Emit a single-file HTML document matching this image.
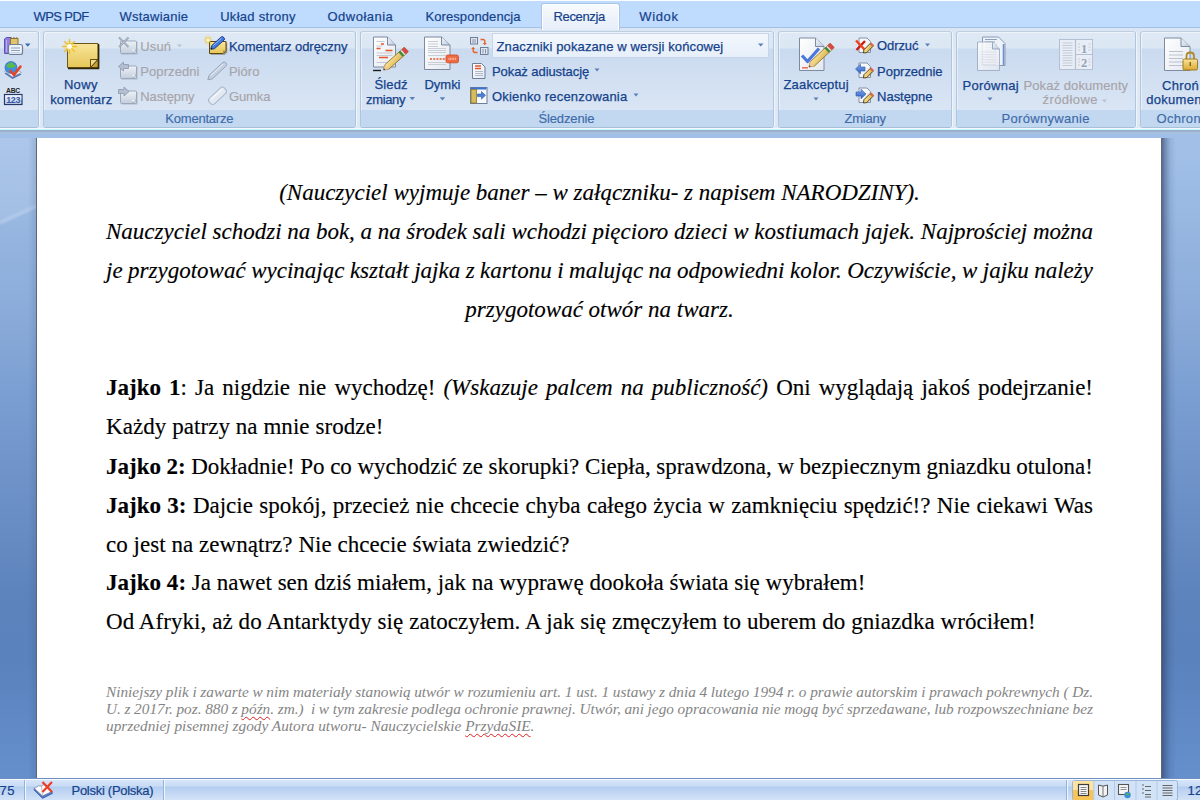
<!DOCTYPE html>
<html><head><meta charset="utf-8">
<style>
*{margin:0;padding:0;box-sizing:border-box}
html,body{width:1200px;height:800px;overflow:hidden;position:relative;font-family:"Liberation Sans",sans-serif;background:#a6c4ea}
.a{position:absolute;white-space:nowrap}
#tabs{left:0;top:0;width:1200px;height:28px;background:#bfdbfe;border-top:1px solid #fafcff;border-bottom:1px solid #a3c0ea}
.tab{font-size:13px;color:#15428b;line-height:14px;-webkit-text-stroke:.2px}
#acttab{left:541px;top:3px;width:79px;height:27px;border:1px solid #a9c5e9;border-bottom:none;border-radius:3px 3px 0 0;background:linear-gradient(#f8fbff,#edf2fa 60%,#e6eef9);box-shadow:inset 1px 1px 0 #fff,inset -1px 0 0 #fff}
#ribbon{left:0;top:28px;width:1200px;height:102px;background:linear-gradient(#dbe6f4,#e0eaf7 40%,#dde8f6)}
.grp{top:31px;height:97px;border:1px solid #afc6de;border-top-color:#bfcfe0;border-bottom-color:#a6c0d8;border-radius:3px;background:linear-gradient(#dfe9f5 0,#dce7f4 16px,#cadaef 17px,#d9e5f4 77px);box-shadow:inset 1px 1px 0 rgba(255,255,255,.45),1px 0 0 rgba(255,255,255,.55)}
.grp .lb{position:absolute;left:0;right:0;bottom:0;height:17px;background:#c2d8f0;border-radius:0 0 2px 2px}
.lbl{font-size:13px;color:#3e6aaa;line-height:14px;-webkit-text-stroke:.15px}
.st{font-size:13px;color:#15428b;line-height:14px;-webkit-text-stroke:.2px}
.t{font-size:13px;color:#15428b;line-height:14px;-webkit-text-stroke:.25px}
.dis{color:#a7a4a9;-webkit-text-stroke:.15px}
#gap{left:0;top:128px;width:1200px;height:10px;background:linear-gradient(#f2f8ff 0,#f2f8ff 1px,#c6f6fc 1px,#c6f6fc 2px,#9aafcc 2px,#9aafcc 4px,#a9c1e1 4px,#a9c1e1 6px,#a1c0e8 6px)}
#bg{left:0;top:138px;width:1200px;height:640px;background:linear-gradient(#a3c1e8 0,#8aabd9 180px,#7a9ed2 260px,#5d83bc 460px,#5a82bd 520px,#6590cc 640px)}
#streak{left:0;top:138px;width:37px;height:110px}
#page{left:36px;top:138px;width:1125px;height:640px;background:#fff;border-left:1px solid #5c6878}
#shR{left:1161px;top:138px;width:15px;height:640px;background:linear-gradient(90deg,rgba(100,100,105,.95) 0,rgba(100,100,105,.95) 1px,rgba(45,65,105,.65) 1px,rgba(45,65,105,.42) 4px,rgba(45,65,105,.12) 9px,rgba(45,65,105,0) 15px)}
#shL{left:28px;top:138px;width:8px;height:640px;background:linear-gradient(90deg,rgba(40,60,100,0),rgba(40,60,100,.14))}
.doc{font-family:"Liberation Serif",serif;font-size:23px;color:#000;line-height:39px;position:absolute;white-space:nowrap;-webkit-text-stroke:.15px}
.just{text-align:justify;text-align-last:justify;white-space:normal}
.foot{font-size:15.3px;line-height:17px;font-style:italic;color:#848484;-webkit-text-stroke:0}
.sq{text-decoration:underline wavy #e02020;text-decoration-thickness:1px;text-underline-offset:2px;text-decoration-skip-ink:none}
#status{left:0;top:778px;width:1200px;height:22px;border-top:1px solid #6f8fc0;background:linear-gradient(#f7faff 0,#f7faff 1px,#d6e5f9 1px,#c9dcf5 7px,#b2cdf2 8px,#bcd3f2 11px,#d2e2f7 21px)}
</style></head><body>
<div class="a" id="bg"></div>
<svg class="a" id="streak" width="37" height="110" viewBox="0 0 37 110"><defs><filter id="bl"><feGaussianBlur stdDeviation="1"/></filter></defs><path d="M0 0h37v67l-37 17z" fill="#fff" opacity=".1"/><path d="M0 85l37-17" stroke="#fff" stroke-width="2.5" opacity=".3" filter="url(#bl)"/></svg>
<div class="a" id="shL"></div><div class="a" id="shR"></div>
<div class="a" id="page"></div>

<div class="doc" style="left:106px;top:173.3px;width:987px">
<div style="text-align:center;font-style:italic">(Nauczyciel wyjmuje baner – w załączniku- z napisem NARODZINY).</div>
<div class="just" style="font-style:italic;word-spacing:-1px">Nauczyciel schodzi na bok, a na środek sali wchodzi pięcioro dzieci w kostiumach jajek. Najprościej można</div>
<div class="just" style="font-style:italic;word-spacing:-1px">je przygotować wycinając kształt jajka z kartonu i malując na odpowiedni kolor. Oczywiście, w jajku należy</div>
<div style="text-align:center;font-style:italic">przygotować otwór na twarz.</div>
</div>
<div class="doc just" style="left:106px;top:368.2px;width:987px;word-spacing:-1px"><b>Jajko 1</b>: Ja nigdzie nie wychodzę! <i>(Wskazuje palcem na publiczność)</i> Oni wyglądają jakoś podejrzanie!</div>
<div class="doc" style="left:106px;top:407.2px;width:987px;letter-spacing:.06px">Każdy patrzy na mnie srodze!</div>
<div class="doc just" style="left:106px;top:447.0px;width:987px;word-spacing:-1px"><b>Jajko 2:</b> Dokładnie! Po co wychodzić ze skorupki? Ciepła, sprawdzona, w bezpiecznym gniazdku otulona!</div>
<div class="doc just" style="left:106px;top:486.0px;width:987px;word-spacing:-1px"><b>Jajko 3:</b> Dajcie spokój, przecież nie chcecie chyba całego życia w zamknięciu spędzić!? Nie ciekawi Was</div>
<div class="doc" style="left:106px;top:525.0px;width:987px;letter-spacing:.04px">co jest na zewnątrz? Nie chcecie świata zwiedzić?</div>
<div class="doc" style="left:106px;top:563.2px;width:987px;letter-spacing:.025px"><b>Jajko 4:</b> Ja nawet sen dziś miałem, jak na wyprawę dookoła świata się wybrałem!</div>
<div class="doc" style="left:106px;top:602.2px;width:987px;letter-spacing:.072px">Od Afryki, aż do Antarktydy się zatoczyłem. A jak się zmęczyłem to uberem do gniazdka wróciłem!</div>
<div class="doc foot" style="left:106px;top:682.7px;width:987px">
<div class="just" style="word-spacing:-1px">Niniejszy plik i zawarte w nim materiały stanowią utwór w rozumieniu art. 1 ust. 1 ustawy z dnia 4 lutego 1994 r. o prawie autorskim i prawach pokrewnych ( Dz.</div>
<div class="just" style="word-spacing:-1px">U. z 2017r. poz. 880 z <span class="sq">późn</span>. zm.)&nbsp; i w tym zakresie podlega ochronie prawnej. Utwór, ani jego opracowania nie mogą być sprzedawane, lub rozpowszechniane bez</div>
<div>uprzedniej pisemnej zgody Autora utworu- Nauczycielskie <span class="sq">PrzydaSIE</span>.</div>
</div>

<div class="a" id="tabs"></div>

<div class="a" id="ribbon"></div>
<div class="a" id="acttab"></div>
<div class="a grp" style="left:-4px;width:43px"><div class="lb"></div></div>
<div class="a grp" style="left:43px;width:313px"><div class="lb"></div></div>
<div class="a grp" style="left:360px;width:414px"><div class="lb"></div></div>
<div class="a grp" style="left:778px;width:174px"><div class="lb"></div></div>
<div class="a grp" style="left:956px;width:180px"><div class="lb"></div></div>
<div class="a grp" style="left:1140px;width:70px"><div class="lb"></div></div>


<div class="a" id="gap"></div>
<div class="a" id="status"></div>
<!--ICONS-->
<svg class="a" style="left:0;top:0" width="1200" height="130" viewBox="0 0 1200 130">
<defs>
<linearGradient id="gNote" x1="0" y1="0" x2="0" y2="1"><stop offset="0" stop-color="#f8e69a"/><stop offset="1" stop-color="#e6c558"/></linearGradient>
<linearGradient id="gFold" x1="0" y1="0" x2="1" y2="1"><stop offset="0" stop-color="#f3dc84"/><stop offset="1" stop-color="#b8902a"/></linearGradient>
<linearGradient id="gDis" x1="0" y1="0" x2="0" y2="1"><stop offset="0" stop-color="#eef2f7"/><stop offset="1" stop-color="#c3cddb"/></linearGradient>
<linearGradient id="gDoc" x1="0" y1="0" x2="1" y2="1"><stop offset="0" stop-color="#ffffff"/><stop offset="1" stop-color="#e4e8ef"/></linearGradient>
<linearGradient id="gCorner" x1="0" y1="0" x2="1" y2="1"><stop offset="0" stop-color="#f4f7fb"/><stop offset="1" stop-color="#b9c8de"/></linearGradient>
<linearGradient id="gPencil" x1="0" y1="0" x2="1" y2="1"><stop offset="0" stop-color="#fbe7a0"/><stop offset="1" stop-color="#d9b04a"/></linearGradient>
<linearGradient id="gBlue" x1="0" y1="0" x2="0" y2="1"><stop offset="0" stop-color="#7fa6ec"/><stop offset="1" stop-color="#2f5fc4"/></linearGradient>
<linearGradient id="gLock" x1="0" y1="0" x2="0" y2="1"><stop offset="0" stop-color="#fbe49a"/><stop offset="1" stop-color="#d9a934"/></linearGradient>
<radialGradient id="gStar"><stop offset="0" stop-color="#ffffff"/><stop offset=".35" stop-color="#fff6b0"/><stop offset="1" stop-color="#f2c62c" stop-opacity="0"/></radialGradient>
<linearGradient id="gCombo" x1="0" y1="0" x2="0" y2="1"><stop offset="0" stop-color="#f4f8fd"/><stop offset="1" stop-color="#e6eef9"/></linearGradient>
</defs>

<!-- group0 icons -->
<path d="M4.5 39l2-1.5h4.5v16h-6.5z" fill="#8f7fe0" stroke="#5e50b0" stroke-width="1"/>
<path d="M6.5 40v12" stroke="#b9adf2" stroke-width="1"/>
<path d="M10.5 38.5h7.5v7h-7.5z" fill="#e2c46a" stroke="#8c7436" stroke-width="1"/>
<path d="M11 37.5l1.5 1l1.5-1l1.5 1l1.5-1l1 1" fill="none" stroke="#8c7436" stroke-width=".8"/>
<rect x="8.5" y="44.5" width="14" height="10" rx="2" fill="#eef3f9" stroke="#6f7f98" stroke-width="1.2"/>
<path d="M11 48h9M11 50.5h9" stroke="#8aa0c0" stroke-width="1.1"/>
<rect x="10.5" y="52" width="10" height="1.5" fill="#c9d6e8"/>
<path d="M25 43.5h5.5l-2.75 3.3z" fill="#3b6ab0"/>
<path d="M4.5 73.5l8 5.5l9-4.5l-8.5-5z" fill="#5270b0"/>
<path d="M4.5 71.5l8 5.5l9-4.5l-8.5-5z" fill="#eef2f8" stroke="#8a96aa" stroke-width=".7"/>
<circle cx="11" cy="67.5" r="6" fill="#3f8fdc" stroke="#2a62a8" stroke-width=".6"/>
<path d="M6.5 65.5c1.5-2.5 4-3.5 6.5-3c-.5 1.5.5 2.5 2.5 2.5c.5 2-2 3.5-4.5 2.5c-2 1-3.5 0-4.5-2z" fill="#5cbb44"/>
<path d="M10.5 71l3.5 4l6.5-8.5" fill="none" stroke="#e5432a" stroke-width="2.6" stroke-linecap="round" stroke-linejoin="round"/>
<text x="13" y="92.5" font-family="Liberation Sans" font-size="6.8" font-weight="bold" text-anchor="middle" fill="#222" letter-spacing="-.2">ABC</text>
<rect x="4.5" y="94.5" width="17.5" height="10" fill="#c9d8ee" stroke="#26386a" stroke-width="1.2"/>
<rect x="5.3" y="95.3" width="16" height="4" fill="#e9f0fa"/>
<text x="13.2" y="103.2" font-family="Liberation Sans" font-size="9" font-weight="bold" text-anchor="middle" fill="#3656a6" letter-spacing="-.3">123</text>

<!-- Nowy komentarz -->
<path d="M68.5 44.5h31v24h-31z" fill="#2a1f05" opacity=".5"/>
<path d="M67.5 43.5h30.5v24h-30.5z" fill="url(#gNote)" stroke="#6b5518" stroke-width="1"/>
<path d="M98.5 44v24.5h-30.5" fill="none" stroke="#2e2306" stroke-width="1.3"/>
<path d="M90.5 67.5v-8h7.5z" fill="#f2dc86" stroke="#4a3a0c" stroke-width=".9"/>
<path d="M90.5 67.5l7.5-8v8z" fill="#c9a235" stroke="#4a3a0c" stroke-width=".9"/>
<circle cx="69.5" cy="46.5" r="6.5" fill="url(#gStar)"/>
<path d="M69.5 39.5v14M62.5 46.5h14M64.5 41.5l10 10M74.5 41.5l-10 10" stroke="#e8b820" stroke-width="1.4" stroke-linecap="round" opacity=".8"/>
<circle cx="69.5" cy="46.5" r="2.5" fill="#fffef0"/>

<!-- disabled notes -->
<g id="dn">
<path d="M121.5 42h16v12.5h-16z" fill="#8e9ab0" opacity=".55"/>
<rect x="120.5" y="41" width="16" height="12.5" rx="1" fill="url(#gDis)" stroke="#9ba7ba" stroke-width="1"/>
<path d="M132 53.5l4.5-4.5" stroke="#a3aec0" stroke-width="1"/>
<circle cx="133.5" cy="50.5" r=".9" fill="#fff"/>
</g>
<path d="M119 37.5l9.5 9.5M128.5 37.5l-9.5 9.5" stroke="#8f9bb0" stroke-width="1.8"/>
<path d="M119 37.5l9.5 9.5M128.5 37.5l-9.5 9.5" stroke="#c9d1dd" stroke-width=".7"/>
<use href="#dn" transform="translate(0 25)"/>
<path d="M118.5 66.5l5-4.5v2.5h5v4h-5v2.5z" fill="#b3bfd0" stroke="#8a97ad" stroke-width=".8"/>
<use href="#dn" transform="translate(0 50)"/>
<path d="M129 91.5l-5-4.5v2.5h-5.5v4h5.5v2.5z" fill="#b3bfd0" stroke="#8a97ad" stroke-width=".8"/>

<!-- Komentarz odręczny -->
<path d="M210 42h16.5v9.5l-2.5 2.5h-14z" fill="#3a2c08" opacity=".45" transform="translate(.7 .7)"/>
<path d="M209.5 41.5h16.5v9l-3 3h-13.5z" fill="url(#gNote)" stroke="#5e4812" stroke-width="1"/>
<path d="M226 50.5l-3 3v-3z" fill="#b8902a"/>
<path d="M208 35.5v9M203.5 40h9M205 37l6 6M211 37l-6 6" stroke="#f2c83a" stroke-width="1.1" opacity=".85"/>
<circle cx="208" cy="40" r="1.6" fill="#fffbe0"/>
<g transform="translate(210.8 49.2) rotate(-42)">
<path d="M0 0l3-2.1h13q1.5 0 1.5 2.1t-1.5 2.1h-13z" fill="#3f7ae0" stroke="#1c3a86" stroke-width=".9"/>
<path d="M4 -1h11.5" stroke="#9cc0f6" stroke-width=".9"/>
<path d="M0 0l1.4-1v2z" fill="#111"/>
</g>
<!-- Pióro -->
<g transform="translate(207.8 79.8) rotate(-43)">
<path d="M0 0l4-2.4h19q1.8 0 1.8 2.4t-1.8 2.4h-19z" fill="#c3cede" stroke="#95a4ba" stroke-width=".9"/>
<path d="M5 -1.1h17" stroke="#e6ecf5" stroke-width="1"/>
</g>
<!-- Gumka -->
<g transform="translate(217.5 95.8) rotate(-43)">
<rect x="-10.3" y="-3.8" width="20.6" height="7.6" rx="3" fill="#e3e9f2" stroke="#aab6c8" stroke-width="1"/>
<path d="M-7.5 -1.8h15" stroke="#f7f9fc" stroke-width="1.2"/>
</g>

<!-- Śledź zmiany -->
<path d="M373.5 37h14l8 8v22h-22z" fill="url(#gDoc)" stroke="#7d8aa0" stroke-width="1"/>
<path d="M387.5 37v8h8" fill="url(#gCorner)" stroke="#7d8aa0" stroke-width="1"/>
<path d="M376.5 41.5h8M376.5 46h6M376.5 53h16M376.5 55.5h16M376.5 62.5h12" stroke="#c4cad4" stroke-width="1"/>
<path d="M381 44h3M376.5 48.5h4M385.5 50.5h7M379 57.5h9" stroke="#e4572e" stroke-width="1.5"/>
<path d="M373 70.5h8" stroke="#1a1a1a" stroke-width="1.4"/>
<g transform="translate(383.5 70) rotate(-42)">
<path d="M0 0l4.5-3h26v6h-26z" fill="url(#gPencil)" stroke="#8c7030" stroke-width=".8"/>
<path d="M0 0l4.5-3v6z" fill="#f0c89a"/>
<path d="M0 0l1.6-1v2z" fill="#333"/>
<rect x="23" y="-3" width="2.5" height="6" fill="#3f8a3a"/>
<rect x="25.5" y="-3" width="1.5" height="6" fill="#d8d8d8"/>
<rect x="27" y="-3" width="4" height="6" fill="#d84848"/>
</g>

<!-- Dymki -->
<path d="M424.5 37h17l8.5 8v24.5h-25.5z" fill="url(#gDoc)" stroke="#7d8aa0" stroke-width="1"/>
<path d="M441.5 37v8h8.5" fill="url(#gCorner)" stroke="#7d8aa0" stroke-width="1"/>
<path d="M428 41.5h10M428 44h10M428 46.5h10M428 48.5h18M428 50.5h18M428 52.5h18M428 55.5h18M428 62.5h18M428 64.5h18" stroke="#c8ced8" stroke-width="1"/>
<path d="M430 59h15" stroke="#e4572e" stroke-width="1.5" stroke-dasharray="2 1.2"/>
<rect x="446" y="55" width="12.5" height="7.8" rx="1.8" fill="#ef6a42" stroke="#cf4a22" stroke-width=".8"/>
<path d="M448.5 58.9h7.5" stroke="#f7b6a0" stroke-width="2.2" stroke-dasharray="1 .6"/>

<!-- Znaczniki small icon -->
<rect x="470.5" y="37.5" width="7" height="6.5" fill="#dfe6f0" stroke="#6f7f99" stroke-width="1"/>
<path d="M472 40h4M472 42h4" stroke="#6f7f99" stroke-width=".8"/>
<rect x="480.5" y="47.5" width="7.5" height="7" fill="#dfe6f0" stroke="#6f7f99" stroke-width="1"/>
<path d="M483 49v4.5M485.5 49v4.5" stroke="#6f7f99" stroke-width=".8"/>
<path d="M480.5 39.5h2.5q1.8 0 1.8 2v2" fill="none" stroke="#e8622c" stroke-width="1.4"/>
<path d="M482.8 43l2 2.3l2-2.3z" fill="#e8622c"/>
<path d="M477.5 52.5h-2.5q-1.8 0-1.8-2v-2" fill="none" stroke="#e8622c" stroke-width="1.4"/>
<path d="M471.2 49l2-2.3l2 2.3z" fill="#e8622c"/>

<!-- combo -->
<rect x="492.5" y="33.5" width="276" height="24" fill="url(#gCombo)" stroke="#c5d6ec" stroke-width="1"/>
<path d="M758 43.5h5.5l-2.75 3z" fill="#5a7fb8"/>

<!-- Pokaż adiustację -->
<path d="M472.5 63.5h9l3.5 3.5v11.5h-12.5z" fill="url(#gDoc)" stroke="#6f7f99" stroke-width="1"/>
<path d="M475 66h6M475 68.5h6" stroke="#e4572e" stroke-width="1.4"/>
<path d="M475 71.5h8M475 73.5h8M475 75.5h8" stroke="#8fa3c0" stroke-width=".7"/>
<path d="M594.5 68.5h5l-2.5 3z" fill="#5a7fb8"/>

<!-- Okienko -->
<rect x="470.5" y="87.5" width="16.5" height="16" fill="#f7f9fc" stroke="#6f7f99" stroke-width="1"/>
<rect x="471" y="87.5" width="15.5" height="2" fill="#3f73d0"/>
<rect x="471" y="89.5" width="5.5" height="13.5" fill="#d6bc5a" stroke="#8a7430" stroke-width=".8"/>
<path d="M477.5 94h4v-2.5l4 3.8l-4 3.8v-2.5h-4z" fill="#4a7fd8" stroke="#2c59a8" stroke-width=".6"/>
<path d="M633.5 93.5h5l-2.5 3z" fill="#5a7fb8"/>

<!-- Śledź zmiany arrow / Dymki arrow -->
<path d="M409.5 97h5.5l-2.75 3.2z" fill="#5a7fb8"/>
<path d="M439.7 97.2h5.5l-2.75 3.2z" fill="#5a7fb8"/>

<!-- Zaakceptuj -->
<path d="M799.5 38h16l8.5 8.5v24h-24.5z" fill="url(#gDoc)" stroke="#7d8aa0" stroke-width="1"/>
<path d="M815.5 38v8.5h8.5" fill="url(#gCorner)" stroke="#7d8aa0" stroke-width="1"/>
<path d="M802 55.5l5.5 6l11.5-13" fill="none" stroke="#4a78dc" stroke-width="3.2" stroke-linejoin="round"/>
<path d="M802 67.8h6" stroke="#ee6a5a" stroke-width="1.5"/>
<g transform="translate(809 67) rotate(-43)">
<path d="M0 0l4.5-3h27v6h-27z" fill="url(#gPencil)" stroke="#8c7030" stroke-width=".8"/>
<path d="M0 0l4.5-3v6z" fill="#f0c89a"/>
<path d="M0 0l1.6-1v2z" fill="#333"/>
<rect x="24" y="-3" width="2.5" height="6" fill="#3f8a3a"/>
<rect x="26.5" y="-3" width="1.5" height="6" fill="#d8d8d8"/>
<rect x="28" y="-3" width="4" height="6" fill="#d84848"/>
</g>
<path d="M813.5 97.5h5l-2.5 3z" fill="#5a7fb8"/>

<!-- Odrzuć / Poprzednie / Następne -->
<g id="smalldoc">
<path d="M859 38h8l3.5 3.5v11h-11.5z" fill="url(#gDoc)" stroke="#7a879c" stroke-width=".9"/>
</g>
<path d="M859 63h8l3.5 3.5v11h-11.5z" fill="url(#gDoc)" stroke="#7a879c" stroke-width=".9"/>
<path d="M859 88h8l3.5 3.5v11h-11.5z" fill="url(#gDoc)" stroke="#7a879c" stroke-width=".9"/>
<path d="M865 41l-8.5 9" stroke="#c81c10" stroke-width="2.4"/><path d="M856 40.5l9 9.5" stroke="#f0401c" stroke-width="2.4"/>
<path d="M855.5 69l5-4.8v2.8h4.5v4h-4.5v2.8z" fill="url(#gBlue)" stroke="#2c59a8" stroke-width=".6"/>
<path d="M866 94l-5-4.8v2.8h-5v4h5v2.8z" fill="url(#gBlue)" stroke="#2c59a8" stroke-width=".6"/>
<g id="pen1" transform="translate(863.5 53) rotate(-45)"><path d="M0 0l2.5-2h9.5v4h-9.5z" fill="url(#gPencil)" stroke="#3d300c" stroke-width=".8"/><rect x="10.5" y="-2" width="2.5" height="4" fill="#d86a4a"/></g>
<g transform="translate(863.5 78) rotate(-45)"><path d="M0 0l2.5-2h9.5v4h-9.5z" fill="url(#gPencil)" stroke="#3d300c" stroke-width=".8"/><rect x="10.5" y="-2" width="2.5" height="4" fill="#d86a4a"/></g>
<g transform="translate(863.5 103) rotate(-45)"><path d="M0 0l2.5-2h9.5v4h-9.5z" fill="url(#gPencil)" stroke="#3d300c" stroke-width=".8"/><rect x="10.5" y="-2" width="2.5" height="4" fill="#d86a4a"/></g>
<path d="M925 43.5h5l-2.5 3z" fill="#5a7fb8"/>
<path d="M177 44.5h5l-2.5 2.8z" fill="#b9c2cf"/>

<!-- Porównaj -->
<path d="M982.5 37h16l6.5 6.5v22h-22.5z" fill="#eef3fa" stroke="#8a9ab3" stroke-width="1"/>
<path d="M1003.5 44v21" stroke="#6d8fd0" stroke-width="1.6"/>
<path d="M985 39.5h12M985 42h10" stroke="#8ea0bb" stroke-width="1"/>
<path d="M985 45h12M985 47.5h12M985 50h12M985 52.5h12M985 55h12M985 57.5h12M985 60h12M985 62.5h12" stroke="#a8b6ca" stroke-width=".8"/>
<path d="M977.5 42h15l7 7v21.5h-22z" fill="url(#gDoc)" stroke="#9aa8bd" stroke-width="1" opacity=".82"/>
<path d="M992.5 42v7h7" fill="url(#gCorner)" stroke="#9aa8bd" stroke-width="1"/>
<path d="M981 52h15M981 54.5h15M981 57h15M981 59.5h15M981 62h15M981 64.5h15" stroke="#dde2ea" stroke-width="1"/>
<path d="M987.5 97.5h5l-2.5 3z" fill="#5a7fb8"/>

<!-- Pokaż dokumenty źródłowe (disabled) -->
<rect x="1059.5" y="39.5" width="33" height="30" fill="#e9eef6" stroke="#b4c0d2" stroke-width="1"/>
<path d="M1075.5 39.5v30M1075.5 54.5h17" stroke="#b4c0d2" stroke-width="1.2"/>
<path d="M1062.5 43h10M1062.5 45.5h10M1062.5 48h10M1062.5 50.5h10M1062.5 53h10M1062.5 55.5h10M1062.5 58h10M1062.5 60.5h10M1062.5 63h10M1062.5 65.5h10" stroke="#c3ccd9" stroke-width="1"/>
<path d="M1078 44h2M1078 47h2M1078 50h2M1088.5 44h2M1088.5 47h2M1088.5 50h2M1078 59h2M1078 62h2M1078 65h2M1088.5 59h2M1088.5 62h2M1088.5 65h2" stroke="#b9c3d2" stroke-width=".8"/>
<text x="1084" y="52.5" font-family="Liberation Serif" font-weight="bold" font-size="12.5" text-anchor="middle" fill="#97a3b6">1</text>
<text x="1084" y="67" font-family="Liberation Serif" font-weight="bold" font-size="12.5" text-anchor="middle" fill="#97a3b6">2</text>
<path d="M1102 99.5h5l-2.5 3z" fill="#b9c2cf"/>

<!-- Chroń dokument -->
<path d="M1164.5 38h16.5l9 8.5v24h-25.5z" fill="url(#gDoc)" stroke="#7d8aa0" stroke-width="1"/>
<path d="M1181 38v8.5h9" fill="url(#gCorner)" stroke="#7d8aa0" stroke-width="1"/>
<path d="M1169 51.5h14M1169 55h14M1169 58.5h14M1169 62h14M1169 65.5h14" stroke="#b9c1cd" stroke-width="1.2"/>
<path d="M1186.5 59v-3q0-3.5 3.75-3.5t3.75 3.5v3" fill="none" stroke="#b08a2a" stroke-width="1.8"/>
<rect x="1183" y="59" width="14.5" height="11" rx="1.5" fill="url(#gLock)" stroke="#a07a20" stroke-width="1"/>
<path d="M1190.25 62v4" stroke="#6a5010" stroke-width="1.2"/>
</svg>

<!--/ICONS-->

<svg class="a" style="left:0;top:778px" width="1200" height="22" viewBox="0 778 1200 22">
<path d="M24.5 780v20M163.5 780v20M1066.5 780v20" stroke="#97b2d8" stroke-width="1"/>
<path d="M25.5 780v20M164.5 780v20M1067.5 780v20" stroke="#f0f6ff" stroke-width="1"/>
<!-- book icon -->
<path d="M34 790l8.5 8.5l10-5l-.5-2.5l-9.5 4.5l-8-7.5z" fill="#4a72c8" stroke="#3558a8" stroke-width=".6"/>
<path d="M34.5 788.5l8 7.5l9.5-4.5l-6-6.5q-2.5-1-4.5 1q-3-1.5-7 2.5z" fill="#fbfcfe" stroke="#7d8696" stroke-width=".8"/>
<path d="M41.5 786l1 9.5" stroke="#9aa3b2" stroke-width=".7"/>
<path d="M42.5 782l9.5 10M52 782l-9.5 10" stroke="#ef3b24" stroke-width="2.2"/>
<!-- view buttons -->
<rect x="1072.5" y="780.5" width="105" height="20" rx="2" fill="#d3e3f7" stroke="#99b5dc" stroke-width="1"/>
<rect x="1073" y="781" width="20.5" height="19" fill="#fde2a0"/>
<rect x="1073" y="790" width="20.5" height="10" fill="#f8c458"/>
<path d="M1093.8 781v19M1114.5 781v19M1136 781v19M1157 781v19" stroke="#b3c9e6" stroke-width="1"/>
<rect x="1078.5" y="784.5" width="10" height="11" fill="#f8f8f8" stroke="#3c3c3c" stroke-width="1.2"/>
<path d="M1080.5 787.5h6M1080.5 789.5h6M1080.5 791.5h6M1080.5 793.5h6" stroke="#7a7a7a" stroke-width=".9"/>
<path d="M1098.5 785v10l4.5 2l4.5-2v-10l-4.5 1.2z" fill="#f2f2f2" stroke="#555" stroke-width="1"/>
<path d="M1103 786.2v10.5" stroke="#555" stroke-width=".8"/>
<rect x="1118.5" y="784.5" width="10" height="10" fill="#f6f6f6" stroke="#555" stroke-width="1.1"/>
<path d="M1120.5 787.5h6M1120.5 789.5h6" stroke="#777" stroke-width=".8"/>
<circle cx="1127.5" cy="795" r="3.2" fill="#3a8fd8"/><path d="M1125.5 794c1-1.5 3-1.5 4 0c-1 1-3 1.5-4 0z" fill="#58b548"/>
<path d="M1142 785h2M1145 786.5h6M1142 789h2M1145 790.5h6M1142 793h2M1145 794.5h6M1145 797h6" stroke="#666" stroke-width="1"/>
<path d="M1162.5 785.5h10M1162.5 788h10M1162.5 790.5h10M1162.5 793h10M1162.5 795.5h10" stroke="#666" stroke-width="1.2"/>
</svg>
<!--RT-->
<div class="a tab" style="left:33.5px;top:10.3px;letter-spacing:-0.60px">WPS PDF</div>
<div class="a tab" style="left:119.5px;top:10.3px;letter-spacing:0.23px">Wstawianie</div>
<div class="a tab" style="left:220.2px;top:10.3px;letter-spacing:0.28px">Układ strony</div>
<div class="a tab" style="left:327.5px;top:10.3px;letter-spacing:0.48px">Odwołania</div>
<div class="a tab" style="left:425.5px;top:10.3px;letter-spacing:0.08px">Korespondencja</div>
<div class="a tab" style="left:553.5px;top:10.3px;letter-spacing:-0.36px">Recenzja</div>
<div class="a tab" style="left:639.2px;top:10.3px;letter-spacing:0.67px">Widok</div>
<div class="a t" style="left:63.9px;top:77.9px;letter-spacing:0.33px">Nowy</div>
<div class="a t" style="left:50.2px;top:92.9px;letter-spacing:0.17px">komentarz</div>
<div class="a t dis" style="left:140.3px;top:39.5px;letter-spacing:0.15px">Usuń</div>
<div class="a t dis" style="left:140.3px;top:64.5px;letter-spacing:0.08px">Poprzedni</div>
<div class="a t dis" style="left:140.3px;top:89.5px;letter-spacing:-0.10px">Następny</div>
<div class="a t" style="left:228.9px;top:39.5px;letter-spacing:-0.04px">Komentarz odręczny</div>
<div class="a t dis" style="left:228.9px;top:64.5px;letter-spacing:0.06px">Pióro</div>
<div class="a t dis" style="left:228.9px;top:89.5px;letter-spacing:-0.08px">Gumka</div>
<div class="a t" style="left:374.5px;top:77.7px;letter-spacing:0.12px">Śledź</div>
<div class="a t" style="left:366.1px;top:92.5px;letter-spacing:-0.36px">zmiany</div>
<div class="a t" style="left:424.5px;top:77.5px;letter-spacing:-0.03px">Dymki</div>
<div class="a t" style="left:496.5px;top:39.5px;letter-spacing:0.12px">Znaczniki pokazane w wersji końcowej</div>
<div class="a t" style="left:492.0px;top:64.5px;letter-spacing:-0.07px">Pokaż adiustację</div>
<div class="a t" style="left:492.0px;top:89.5px;letter-spacing:0.19px">Okienko recenzowania</div>
<div class="a t" style="left:783.5px;top:78.0px;letter-spacing:0.16px">Zaakceptuj</div>
<div class="a t" style="left:877.1px;top:39.2px;letter-spacing:-0.10px">Odrzuć</div>
<div class="a t" style="left:877.1px;top:64.5px;letter-spacing:-0.04px">Poprzednie</div>
<div class="a t" style="left:877.1px;top:89.5px;letter-spacing:-0.04px">Następne</div>
<div class="a t" style="left:962.5px;top:79.2px;letter-spacing:0.26px">Porównaj</div>
<div class="a t dis" style="left:1023.5px;top:79.2px;letter-spacing:0.09px">Pokaż dokumenty</div>
<div class="a t dis" style="left:1042.5px;top:93.0px;letter-spacing:0.42px">źródłowe</div>
<div class="a t" style="left:1162.1px;top:79.2px;letter-spacing:0.30px">Chroń</div>
<div class="a t" style="left:1146.2px;top:93.0px;letter-spacing:0.30px">dokument</div>
<div class="a lbl" style="left:165.3px;top:112.3px;letter-spacing:-0.21px">Komentarze</div>
<div class="a lbl" style="left:538.5px;top:112.3px;letter-spacing:-0.14px">Śledzenie</div>
<div class="a lbl" style="left:844.5px;top:112.3px;letter-spacing:-0.23px">Zmiany</div>
<div class="a lbl" style="left:1001.5px;top:112.3px;letter-spacing:0.31px">Porównywanie</div>
<div class="a lbl" style="left:1156.5px;top:112.3px;letter-spacing:0.30px">Ochrona</div>
<div class="a st" style="left:-0.5px;top:783.5px;letter-spacing:0.53px">75</div>
<div class="a st" style="left:71.5px;top:783.5px;letter-spacing:-0.28px">Polski (Polska)</div>
<div class="a st" style="left:1187.5px;top:783.5px;letter-spacing:0.30px">12</div>
<!--/RT-->
</body></html>
